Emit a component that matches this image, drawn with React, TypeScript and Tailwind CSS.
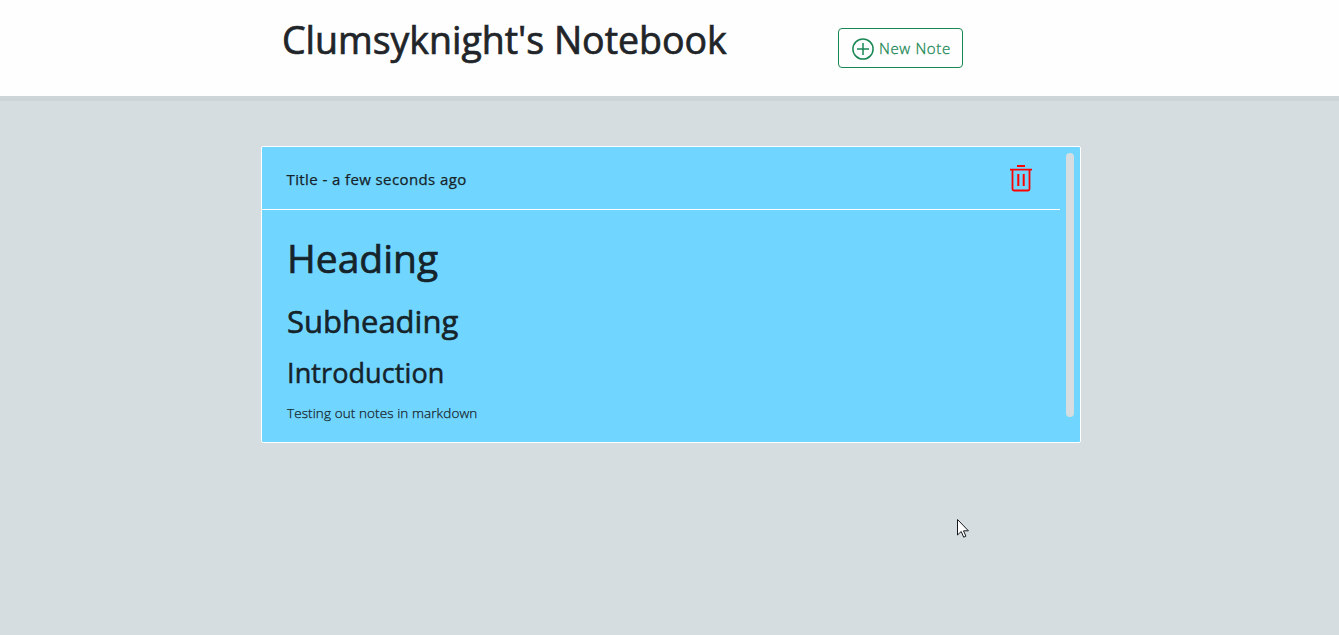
import React from "react";

function PlusCircle() {
  return (
    <svg width="22" height="22" viewBox="0 0 22 22" fill="none" stroke="currentColor" strokeWidth="1.5" className="mt-px block shrink-0">
      <circle cx="11" cy="11" r="10.1" />
      <path d="M11 5v12M5 11h12" />
    </svg>
  );
}

function Trash() {
  return (
    <svg width="24" height="28" viewBox="0 0 24 28" fill="none" stroke="#ff0000" className="block">
      <path d="M8 2h8M1 5.7h22" strokeWidth="1.8" />
      <path d="M3.5 6v19q0 1.5 1.5 1.5h14q1.5 0 1.5-1.5V6" strokeWidth="1.8" />
      <path d="M9.3 10v12M14.7 10v12" strokeWidth="2" />
    </svg>
  );
}

function Cursor() {
  return (
    <svg width="12" height="20" viewBox="0 0 12 20" className="absolute left-[957px] top-[519px]">
      <path d="M.5 .5v15.500l3.700-3.500 2.500 5.700 2.200-1-2.400-5.400h4.900z" fill="#fff" stroke="#16181f" strokeWidth="1" />
    </svg>
  );
}

export default function App() {
  return (
    <div className="relative h-[635px] w-[1339px] overflow-hidden bg-[#d5dde0] font-['Open_Sans',sans-serif] text-[#212529]">
      <header className="flex h-[101px] items-start border-b-[5px] border-[#cdd5d8] bg-[#fefefe] pl-[282px]">
        <h1 className="mt-[16px] w-[556px] whitespace-nowrap text-[37.5px] leading-[48px] tracking-[-0.02px] [-webkit-text-stroke:0.7px]">Clumsyknight's Notebook</h1>
        <button className="mt-[28px] flex h-10 w-[125px] items-center gap-[5px] rounded-[4px] border border-[#198754] pl-[13px] text-[#198754]">
          <PlusCircle />
          <span className="whitespace-nowrap text-[15px] font-light leading-6 tracking-[0.65px] [-webkit-text-stroke:0.3px]">New Note</span>
        </button>
      </header>
      <main className="pl-[261px] pt-[45px]">
        <article className="flex h-[297px] w-[820px] justify-between rounded-[2px] border border-white bg-[#71d6ff] text-[#15232a]">
          <div className="w-[798px]">
            <div className="flex h-[63px] items-start justify-between border-b border-white pl-[24.5px] pr-[27px]">
              <h2 className="mt-[20px] whitespace-nowrap text-[15px] leading-6 tracking-[0.4px] [-webkit-text-stroke:0.25px]">Title - a few seconds ago</h2>
              <div className="mt-[17px]"><Trash /></div>
            </div>
            <div className="flex flex-col whitespace-nowrap pl-[25px]">
              <h1 className="mt-[24px] text-[39px] leading-[48px] [-webkit-text-stroke:0.7px]">Heading</h1>
              <h2 className="mt-[20px] text-[31px] leading-[38px] [-webkit-text-stroke:0.6px]">Subheading</h2>
              <h3 className="mt-[16px] text-[27px] leading-[34px] tracking-[0.1px] [-webkit-text-stroke:0.5px]">Introduction</h3>
              <p className="mt-[13px] text-[13.5px] font-light leading-[21px] tracking-[0.1px] [-webkit-text-stroke:0.25px]">Testing out notes in markdown</p>
            </div>
          </div>
          <div className="mr-[6px] mt-[6px] h-[264px] w-[8px] rounded-full bg-[#d5dde0]" />
        </article>
      </main>
      <Cursor />
    </div>
  );
}
